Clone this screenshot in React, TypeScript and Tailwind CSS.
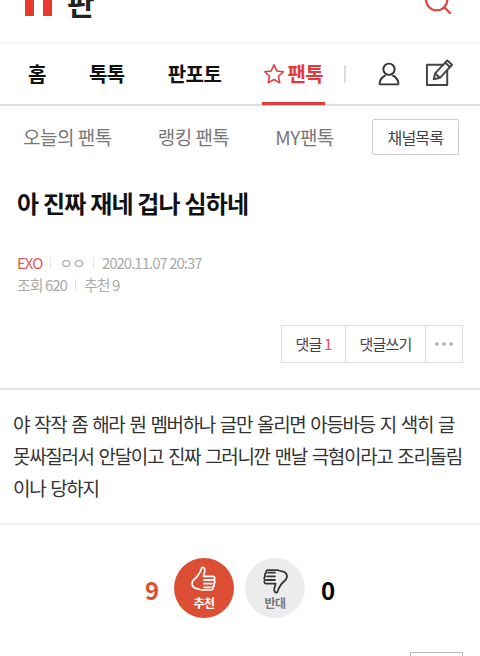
import { Search } from "lucide-react"

const font = { fontFamily: '"Noto Sans CJK KR", "Noto Sans", sans-serif' }

function Thumb({ className }: { className: string }) {
  return (
    <svg className={className} width="28" height="28" viewBox="0 0 26 27" fill="none" stroke="currentColor" strokeWidth="1.700" strokeLinejoin="round" strokeLinecap="round">
      <path d="M11 1.500c1.800-.6 3 1 2.800 3-.2 2-1.300 4-1.300 5.500h9c2 0 2.600 2.800.8 3.500 1.600.6 1.500 3-.2 3.500 1.200.8 1 2.900-.6 3.200.6 1.200-.1 2.800-1.800 2.800H11c-2 0-3-1-5-1.200C3 21.500 1 19 1.500 16c.4-2.500 3-3.500 5-6 2-2.500 3.500-5 4.500-8.500z" />
      <path d="M13 13.500h8M13 17h7.500M13 20.500h6.500" />
    </svg>
  )
}

export default function App() {
  return (
    <div className="h-[656px] w-[480px] overflow-hidden bg-white" style={font}>
      <header className="flex h-[43px] items-start justify-between border-b border-[#eeeeee] pl-[25px] pr-[26px]">
        <div className="flex items-start">
          <div className="flex gap-[9px]">
            <span className="h-4 w-[9px] bg-[#e8392f]" />
            <span className="h-4 w-[9px] bg-[#e8392f]" />
          </div>
          <span className="ml-[15px] -mt-[16px] text-[30px] leading-[36px] font-bold text-[#222]">판</span>
        </div>
        <Search size={32} strokeWidth={1.600} className="-mt-[15px] text-[#e0463e]" />
      </header>

      <nav className="flex h-[63px] items-center border-b-2 border-[#dddddd] text-[20px] font-bold tracking-[-0.5px] text-[#111]">
        <a className="ml-[28px]">홈</a>
        <a className="ml-[43px]">톡톡</a>
        <a className="ml-[43px]">판포토</a>
        <a className="relative ml-[41px] flex h-full w-[63px] items-center pl-[1px] text-[#e2393a]">
          <svg width="22" height="22" viewBox="0 0 22 22" fill="none" stroke="#e2393a" strokeWidth="1.500" strokeLinejoin="round">
            <path d="M11 1.800l2.800 6.100 6.500.8-4.800 4.500 1.300 6.600L11 16.500l-5.800 3.300 1.300-6.600-4.800-4.500 6.500-.8z" />
          </svg>
          <span className="ml-[2px] whitespace-nowrap">팬톡</span>
          <span className="absolute -bottom-[1px] left-0 h-[3px] w-full bg-[#e2393a]" />
        </a>
        <span className="ml-[19px] h-[18px] w-[2px] bg-[#dddddd]" />
        <svg className="ml-[31px]" width="24" height="26" viewBox="0 0 26 30" fill="none" stroke="#333" strokeWidth="2.200">
          <circle cx="13" cy="9.500" r="6.500" />
          <path d="M2 27c0-6 4-9 7-10.500M24 27c0-6-4-9-7-10.500M2 27h22" />
        </svg>
        <svg className="ml-[24px] -mt-[3px]" width="29" height="29" viewBox="0 0 30 30" fill="none" stroke="#444" strokeWidth="2" strokeLinejoin="round">
          <path d="M20 7H2v21h21V13" />
          <path d="M9 22l1.500-6L23 2.500l5 4.500-12.500 13.500z" />
          <path d="M21 5l5 4.500M10.500 16l5 4.500" />
        </svg>
      </nav>

      <div className="flex h-[62px] items-center text-[19px] tracking-[-0.5px] text-[#777]">
        <span className="ml-[23px]">오늘의 팬톡</span>
        <span className="ml-[46px]">랭킹 팬톡</span>
        <span className="ml-[46px]">MY팬톡</span>
        <span className="ml-[38px] flex h-[36px] w-[87px] items-center justify-center rounded-[2px] border border-[#cccccc] text-[16px] tracking-[-0.8px] text-[#444]">
          채널목록
        </span>
      </div>

      <h1 className="mt-[17px] ml-[17px] text-[24px] leading-[36px] font-bold tracking-[-0.8px] text-[#111]">
        아 진짜 재네 겁나 심하네
      </h1>

      <div className="mt-[31px] ml-[17px] text-[15px] leading-[22px] tracking-[-1px] text-[#aaaaaa]">
        <div className="flex items-center">
          <span className="text-[#df5a55]">EXO</span>
          <span className="mx-[8px] h-[12px] w-px bg-[#e5e5e5]" />
          <span>ㅇㅇ</span>
          <span className="mx-[8px] h-[12px] w-px bg-[#e5e5e5]" />
          <span>2020.11.07 20:37</span>
        </div>
        <div className="flex items-center">
          <span>조회 620</span>
          <span className="mx-[8px] h-[12px] w-px bg-[#e5e5e5]" />
          <span>추천 9</span>
        </div>
      </div>

      <div className="mt-[29px] flex justify-end pr-[17px]">
        <div className="flex h-[38px] items-center border border-[#dddddd] text-[15px] tracking-[-0.8px] text-[#444]">
          <span className="flex h-full w-[64px] items-center justify-center border-r border-[#dddddd]">
            댓글&nbsp;<span className="text-[#d9534f]">1</span>
          </span>
          <span className="flex h-full w-[80px] items-center justify-center border-r border-[#dddddd]">댓글쓰기</span>
          <span className="flex h-full w-[36px] items-center justify-center gap-[3px]">
            <i className="size-[4px] rounded-full bg-[#bbbbbb]" />
            <i className="size-[4px] rounded-full bg-[#bbbbbb]" />
            <i className="size-[4px] rounded-full bg-[#bbbbbb]" />
          </span>
        </div>
      </div>

      <div className="mt-[25px] h-[137px] border-y-2 border-y-[#e3e3e3] border-b-[#eeeeee] px-[13px] pt-[18px] text-[19px] leading-[32px] tracking-[-1.35px] [word-spacing:2px] text-[#333]">
        야 작작 좀 해라 뭔 멤버하나 글만 올리면 아등바등 지 색히 글 못싸질러서 안달이고 진짜 그러니깐 맨날 극혐이라고 조리돌림 이나 당하지
      </div>

      <div className="mt-[33px] flex items-center">
        <span className="ml-[145px] w-[29px] pt-[3px] text-[24px] font-bold text-[#dd4f35]">9</span>
        <div className="flex size-[60px] flex-col items-center justify-center rounded-full bg-[#dd4f35] text-[12px] leading-[14px] font-bold tracking-[-0.5px] text-white">
          <Thumb className="text-white" />
          <span className="mt-[2px]">추천</span>
        </div>
        <div className="ml-[11px] flex size-[60px] flex-col items-center justify-center rounded-full bg-[#ececec] text-[12px] leading-[14px] font-bold tracking-[-0.5px] text-[#777]">
          <Thumb className="rotate-180 text-[#333]" />
          <span className="mt-[2px]">반대</span>
        </div>
        <span className="ml-[16px] pt-[3px] text-[24px] font-bold text-black">0</span>
      </div>

      <div className="mt-[34px] flex justify-end pr-[17px]">
        <span className="h-[30px] w-[53px] border border-[#bbbbbb]" />
      </div>
    </div>
  )
}
